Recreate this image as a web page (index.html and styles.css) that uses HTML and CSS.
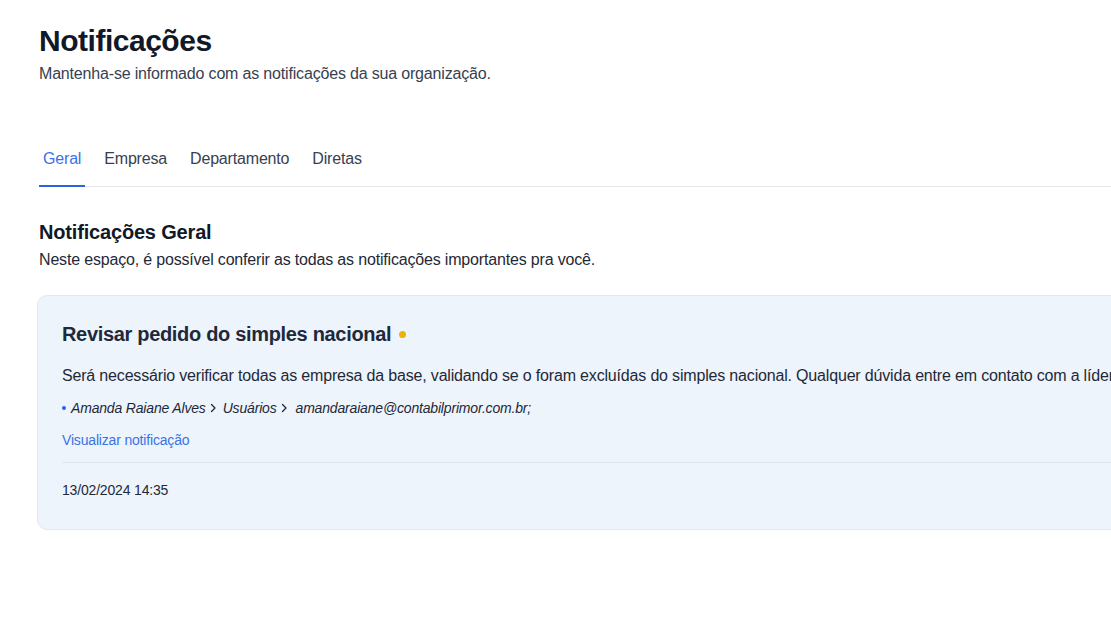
FILE: index.html
```html
<!DOCTYPE html>
<html lang="pt-BR">
<head>
<meta charset="utf-8">
<title>Notificações</title>
<link rel="stylesheet" href="styles.css">
</head>
<body>
<main class="page">
  <header class="header">
    <h1 class="title">Notificações</h1>
    <p class="subtitle">Mantenha-se informado com as notificações da sua organização.</p>
  </header>

  <nav class="tabs">
    <a class="tab tab-active">Geral</a>
    <a class="tab">Empresa</a>
    <a class="tab">Departamento</a>
    <a class="tab">Diretas</a>
  </nav>

  <section class="section">
    <h2 class="section-title">Notificações Geral</h2>
    <p class="section-desc">Neste espaço, é possível conferir as todas as notificações importantes pra você.</p>

    <article class="card">
      <h3 class="card-title">Revisar pedido do simples nacional <span class="unread-dot"></span></h3>
      <p class="card-body">Será necessário verificar todas as empresa da base, validando se o foram excluídas do simples nacional. Qualquer dúvida entre em contato com a líder do setor.</p>
      <div class="meta">
        <span class="meta-dot"></span>
        <span>Amanda Raiane Alves</span>
        <svg class="chev" viewBox="0 0 8 10" width="8" height="10"><path d="M2.5 1.5 L6 5 L2.5 8.5" fill="none" stroke="currentColor" stroke-width="1.3" stroke-linecap="round" stroke-linejoin="round"/></svg>
        <span>Usuários</span>
        <svg class="chev" viewBox="0 0 8 10" width="8" height="10"><path d="M2.5 1.5 L6 5 L2.5 8.5" fill="none" stroke="currentColor" stroke-width="1.3" stroke-linecap="round" stroke-linejoin="round"/></svg>
        <span class="meta-email">amandaraiane@contabilprimor.com.br;</span>
      </div>
      <a class="card-link">Visualizar notificação</a>
      <div class="card-footer">13/02/2024 14:35</div>
    </article>
  </section>
</main>
</body>
</html>
```

FILE: styles.css
```css
html, body {
  margin: 0;
  padding: 0;
  overflow: hidden;
  background: #ffffff;
}

body {
  font-family: "Liberation Sans", Arial, sans-serif;
  color: #111827;
  letter-spacing: -0.011em;
}

.page {
  width: 1300px;
  padding: 23px 0 0 39px;
  box-sizing: border-box;
}

.title {
  margin: 0;
  font-size: 30px;
  line-height: 36px;
  font-weight: 700;
  color: #111827;
  letter-spacing: -0.016em;
}

.subtitle {
  margin: 3px 0 0;
  font-size: 16px;
  line-height: 24px;
  color: #374151;
}

.tabs {
  display: flex;
  gap: 15px;
  margin-top: 53px;
  border-bottom: 1px solid #e5e7eb;
}

.tab {
  padding: 8px 4px 14px;
  font-size: 16px;
  line-height: 24px;
  color: #374151;
  border-bottom: 2px solid transparent;
  margin-bottom: -1px;
  cursor: pointer;
}

.tab-active {
  color: #3b72e6;
  border-bottom-color: #2f62e0;
}

.section {
  margin-top: 31px;
}

.section-title {
  margin: 0;
  font-size: 20px;
  line-height: 28px;
  font-weight: 700;
  color: #111827;
}

.section-desc {
  margin: 2px 0 0;
  font-size: 16px;
  line-height: 24px;
  color: #1f2937;
}

.card {
  margin: 23px 0 0 -2px;
  padding: 24px 24px 29px;
  background: #edf4fc;
  border: 1px solid #e1e8f0;
  border-radius: 10px;
}

.card-title {
  margin: 0;
  display: flex;
  align-items: center;
  gap: 8px;
  font-size: 20px;
  line-height: 28px;
  font-weight: 700;
  color: #1e293b;
  letter-spacing: -0.016em;
}

.unread-dot {
  width: 7px;
  height: 7px;
  border-radius: 50%;
  background: #eab308;
}

.card-body {
  margin: 16px 0 0;
  font-size: 16px;
  line-height: 24px;
  color: #1f2937;
  white-space: nowrap;
}

.meta {
  display: flex;
  align-items: center;
  gap: 3px;
  margin-top: 10px;
  font-size: 14px;
  line-height: 20px;
  font-style: italic;
  color: #1f2937;
}

.meta-dot {
  width: 4px;
  height: 4px;
  border-radius: 50%;
  background: #2563eb;
  margin-right: 2px;
}

.chev {
  color: #1f2937;
  margin-right: 3px;
}

.meta-email {
  margin-left: 2px;
}

.card-link {
  display: block;
  margin-top: 12px;
  font-size: 14px;
  line-height: 20px;
  color: #3b72e6;
  cursor: pointer;
}

.card-footer {
  margin-top: 12px;
  padding-top: 17px;
  border-top: 1px solid #dde5ee;
  font-size: 14px;
  line-height: 20px;
  color: #1f2937;
}
```
